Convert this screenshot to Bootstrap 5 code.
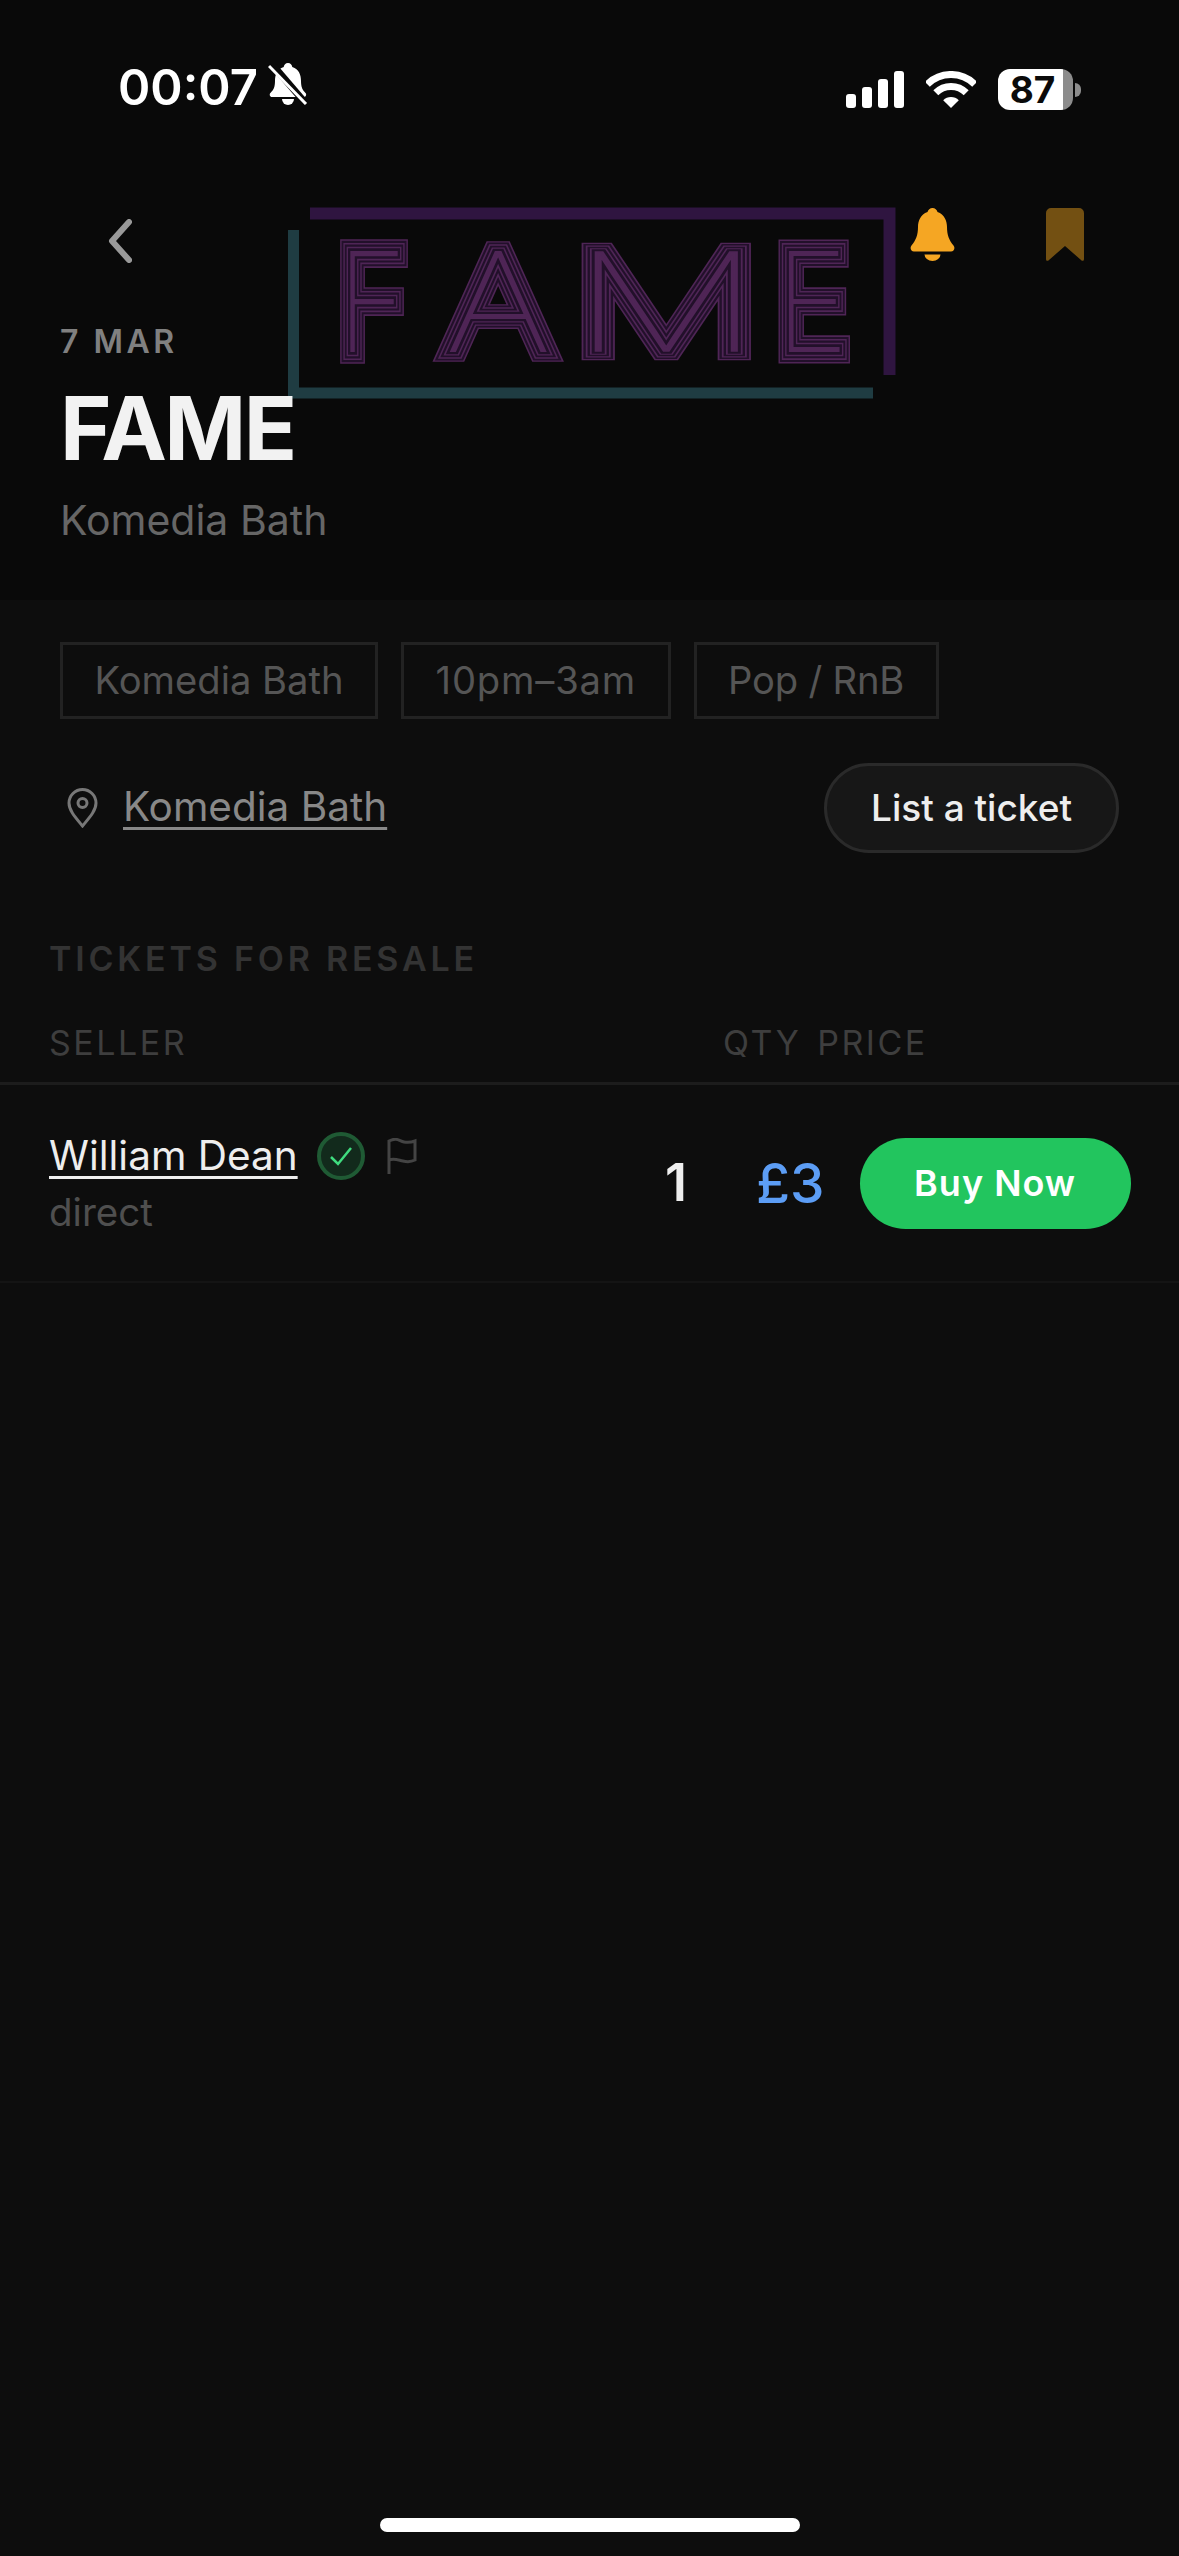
<!DOCTYPE html>
<html lang="en">
<head>
    <meta charset="UTF-8">
    <title>FAME - Komedia Bath</title>
    <link href="https://cdn.jsdelivr.net/npm/bootstrap@5.3.0/dist/css/bootstrap.min.css" rel="stylesheet">
    <style>
        body {
            background-color: #0d0d0d;
            font-family: Inter, "Liberation Sans", sans-serif;
            width: 1179px;
            height: 2556px;
            overflow: hidden;
            position: relative;
        }
        .hero-area {
            background-color: #090909;
            height: 600px;
            position: relative;
        }
        .hero-logo {
            position: absolute;
            left: 280px;
            top: 200px;
        }
        .logo-glyph {
            font-family: Inter, sans-serif;
            font-size: 136px;
            font-weight: 100;
            vector-effect: non-scaling-stroke;
            stroke-miterlimit: 2;
        }
        .status-strip {
            height: 130px;
            padding: 59px 98px 0 118px;
            position: relative;
        }
        .clock {
            font-size: 49px;
            font-weight: 600;
            line-height: 58px;
            color: #fff;
            margin-right: 10px;
        }
        .status-right { margin-top: 10px; gap: 22px; }
        .batt-body {
            width: 75px;
            height: 41px;
            border-radius: 12px;
            background: linear-gradient(90deg, #fff 87%, #8c8c8c 87%);
            color: #0a0a0a;
            font-size: 37px;
            font-weight: 700;
            line-height: 41px;
            text-align: center;
            padding-right: 6px;
        }
        .batt-tip {
            width: 6px;
            height: 14px;
            border-radius: 0 7px 7px 0;
            background: #8c8c8c;
            margin-left: 2px;
        }
        .top-nav {
            height: 188px;
            padding: 78px 95px 0 108px;
            position: relative;
        }
        .nav-back { margin-top: 11px; }
        .nav-bell { margin-right: 91px; }
        .hero-text { padding-left: 60px; position: relative; margin-top: 4px; }
        .date-line {
            font-size: 32px;
            font-weight: 600;
            letter-spacing: 3.5px;
            line-height: 40px;
            color: #808080;
        }
        .hero-title {
            font-size: 88px;
            font-weight: 700;
            line-height: 100px;
            letter-spacing: -2.5px;
            color: #f2f2f2;
            margin: 16px 0 0;
        }
        .hero-venue {
            font-size: 41px;
            line-height: 50px;
            color: #666;
            margin-top: 17px;
        }
        .chip-row { padding: 42px 0 0 60px; gap: 23px; }
        .chip-box {
            border: 3px solid #222;
            height: 77px;
            padding: 0 31.5px;
            font-size: 38.2px;
            line-height: 71px;
            color: #555;
        }
        .chip-time { letter-spacing: .8px; }
        .chip-genre { letter-spacing: -.2px; }
        .venue-row { padding: 43px 60px 0 67px; height: 134px; }
        .venue-link {
            font-size: 40.5px;
            color: #888;
            text-decoration: underline;
            text-decoration-thickness: 3px;
            text-underline-offset: 6px;
            margin-left: 25px;
        }
        .list-btn {
            width: 295px;
            height: 90px;
            border: 3px solid #2a2a2a;
            border-radius: 45px;
            background-color: #171717;
            color: #eee;
            font-size: 37px;
            font-weight: 500;
            padding: 0;
        }
        .section-label {
            font-size: 34px;
            font-weight: 600;
            letter-spacing: 3.8px;
            line-height: 40px;
            color: #333;
            padding: 86px 0 0 49px;
        }
        .head-row {
            height: 62px;
            margin-top: 44px;
            padding-left: 49px;
            border-bottom: 3px solid #1c1c1c;
            font-size: 34px;
            letter-spacing: 2.5px;
            line-height: 40px;
            color: #3e3e3e;
        }
        .head-qty { margin-left: 536px; }
        .head-price { margin-left: 16px; }
        .seller-row {
            height: 198px;
            padding-left: 49px;
            border-bottom: 2px solid #141414;
        }
        .seller-cell { width: 560px; padding-top: 46px; }
        .seller-name {
            font-size: 40.5px;
            line-height: 50px;
            color: #eee;
            text-decoration: underline;
            text-decoration-thickness: 3px;
            text-underline-offset: 6px;
        }
        .verified-tick { margin-left: 19px; }
        .report-flag { margin-left: 22px; }
        .seller-sub {
            font-size: 38.5px;
            line-height: 48px;
            color: #4f4f4f;
            margin-top: 7px;
        }
        .qty-num {
            font-size: 52px;
            font-weight: 600;
            color: #eee;
            width: 38px;
            margin-left: 48px;
            text-align: center;
        }
        .price-num {
            font-size: 55px;
            font-weight: 500;
            color: #5c9df5;
            margin-left: 61px;
        }
        .buy-btn {
            width: 271px;
            height: 91px;
            border: 0;
            border-radius: 46px;
            background-color: #22c55e;
            color: #fff;
            font-size: 36px;
            font-weight: 600;
            letter-spacing: 1px;
            padding: 0;
            margin-left: 35px;
        }
        .home-bar {
            position: absolute;
            left: 380px;
            bottom: 24px;
            width: 420px;
            height: 14px;
            border-radius: 7px;
            background-color: #fff;
        }
    </style>
</head>
<body>
    <div class="hero-area">
        <!-- event poster sits behind the header -->
        <svg class="hero-logo" width="630" height="210" viewBox="280 200 630 210">
            <defs>
                <g id="logoWord">
                    <text class="logo-glyph" transform="translate(338 351) scale(.86 1)">F</text>
                    <text class="logo-glyph" transform="translate(446 351) scale(1.2 1)">A</text>
                    <text class="logo-glyph" transform="translate(572 351) scale(1.55 1)">M</text>
                    <text class="logo-glyph" transform="translate(776 351) scale(.9 1)">E</text>
                </g>
            </defs>
            <path d="M310 213.500H889.500V375" fill="none" stroke="#2f1540" stroke-width="12"/>
            <path d="M293.500 230V393H873" fill="none" stroke="#1f3c42" stroke-width="11"/>
            <use href="#logoWord" fill="#4f2556" stroke="#4f2556" stroke-width="24"/>
            <use href="#logoWord" fill="#22102a" stroke="#22102a" stroke-width="21"/>
            <use href="#logoWord" fill="#4f2556" stroke="#4f2556" stroke-width="17"/>
            <use href="#logoWord" fill="#22102a" stroke="#22102a" stroke-width="14"/>
            <use href="#logoWord" fill="#4f2556" stroke="#4f2556" stroke-width="10"/>
            <use href="#logoWord" fill="#22102a" stroke="#22102a" stroke-width="7"/>
            <use href="#logoWord" fill="#4f2556" stroke="#4f2556" stroke-width="2"/>
        </svg>

        <div class="status-strip d-flex align-items-start">
            <span class="clock">00:07</span>
            <svg class="mt-1" width="40" height="42" viewBox="0 0 40 42">
                <path fill="#fff" d="M20 0c2.500 0 4 1.800 4.300 4C31 6 33 12 33 18c0 6 1.500 9 4.500 12 1.400 1.500.5 4-1.600 4H4c-2.100 0-3-2.500-1.600-4C5.500 27 7 24 7 18 7 12 9 6 15.700 4 16 1.800 17.500 0 20 0z"/>
                <path fill="#fff" d="M14 36h12a6 6 0 0 1-12 0z"/>
                <path d="M3 0l36 42" stroke="#090909" stroke-width="7"/>
                <path d="M1 3l37 38" stroke="#fff" stroke-width="3"/>
            </svg>
            <div class="status-right ms-auto d-flex align-items-center">
                <svg width="58" height="37" viewBox="0 0 58 37" fill="#fff">
                    <rect x="0" y="23" width="10" height="14" rx="3"/>
                    <rect x="16" y="16" width="10" height="21" rx="3"/>
                    <rect x="32" y="8" width="10" height="29" rx="3"/>
                    <rect x="48" y="0" width="10" height="37" rx="3"/>
                </svg>
                <svg width="50" height="37" viewBox="0 0 50 37">
                    <path d="M1.300 13.300a33.500 33.500 0 0 1 47.400 0" fill="none" stroke="#fff" stroke-width="7"/>
                    <path d="M9.800 21.800a21.500 21.500 0 0 1 30.400 0" fill="none" stroke="#fff" stroke-width="7"/>
                    <path d="M25 37L17.200 29.200a11 11 0 0 1 15.600 0z" fill="#fff"/>
                </svg>
                <div class="d-flex align-items-center">
                    <div class="batt-body">87</div>
                    <div class="batt-tip"></div>
                </div>
            </div>
        </div>

        <div class="top-nav d-flex align-items-start">
            <svg class="nav-back me-auto" width="24" height="44" viewBox="0 0 24 44">
                <path d="M21 3L4 22l17 19" fill="none" stroke="#999" stroke-width="6" stroke-linecap="round" stroke-linejoin="round"/>
            </svg>
            <svg class="nav-bell" width="45" height="53" viewBox="0 0 45 53">
                <path fill="#f5a623" d="M22.500 0c2.500 0 4.500 1.700 5 4C34.500 6.500 37 13 37 19c0 8 2 13 6.500 18.500 2 2.500.5 6-2.500 6H4c-3 0-4.500-3.500-2.500-6C6 32 8 27 8 19 8 13 10.500 6.500 17.500 4c.5-2.300 2.500-4 5-4z"/>
                <path fill="#f5a623" d="M14.500 46.500h16a8 6.500 0 0 1-16 0z"/>
            </svg>
            <svg width="38" height="53" viewBox="0 0 38 53">
                <path fill="#735012" d="M5 0h28a5 5 0 0 1 5 5v46c0 2-1.500 2.500-3 1L19 38 3 52c-1.500 1.500-3 1-3-1V5a5 5 0 0 1 5-5z"/>
            </svg>
        </div>

        <div class="hero-text">
            <div class="date-line">7 MAR</div>
            <h1 class="hero-title">FAME</h1>
            <div class="hero-venue">Komedia Bath</div>
        </div>
    </div>

    <div class="chip-row d-flex">
        <div class="chip-box">Komedia Bath</div>
        <div class="chip-box chip-time">10pm–3am</div>
        <div class="chip-box chip-genre">Pop / RnB</div>
    </div>

    <div class="venue-row d-flex align-items-center">
        <svg width="31" height="40" viewBox="0 0 31 40">
            <path d="M15.500 38C8 29 2 22.500 2 15a13.500 13.500 0 0 1 27 0c0 7.500-6 14-13.500 23z" fill="none" stroke="#777" stroke-width="3"/>
            <circle cx="15.500" cy="15" r="4.500" fill="none" stroke="#777" stroke-width="3"/>
        </svg>
        <span class="venue-link">Komedia Bath</span>
        <button class="list-btn btn ms-auto">List a ticket</button>
    </div>

    <div class="section-label">TICKETS FOR RESALE</div>

    <div class="head-row d-flex">
        <span>SELLER</span>
        <span class="head-qty">QTY</span>
        <span class="head-price">PRICE</span>
    </div>

    <div class="seller-row d-flex align-items-center">
        <div class="seller-cell align-self-start">
            <div class="d-flex align-items-center">
                <span class="seller-name">William Dean</span>
                <svg class="verified-tick" width="48" height="48" viewBox="0 0 48 48">
                    <circle cx="24" cy="24" r="22" fill="#122a1c" stroke="#1f5a34" stroke-width="4"/>
                    <path d="M14 25l7 7 13-16" fill="none" stroke="#3fdc7f" stroke-width="2.500"/>
                </svg>
                <svg class="report-flag" width="30" height="36" viewBox="0 0 30 36">
                    <path d="M2 36V3c8-4 10 0 15 1 4 .8 7 .5 11-1v19c-4 2-8 2-12 1-5-1-9-3-14-1" fill="none" stroke="#444" stroke-width="3"/>
                </svg>
            </div>
            <div class="seller-sub">direct</div>
        </div>
        <span class="qty-num">1</span>
        <span class="price-num">£3</span>
        <button class="buy-btn btn">Buy Now</button>
    </div>

    <div class="home-bar"></div>

    <script src="https://cdn.jsdelivr.net/npm/bootstrap@5.3.0/dist/js/bootstrap.bundle.min.js"></script>
</body>
</html>
